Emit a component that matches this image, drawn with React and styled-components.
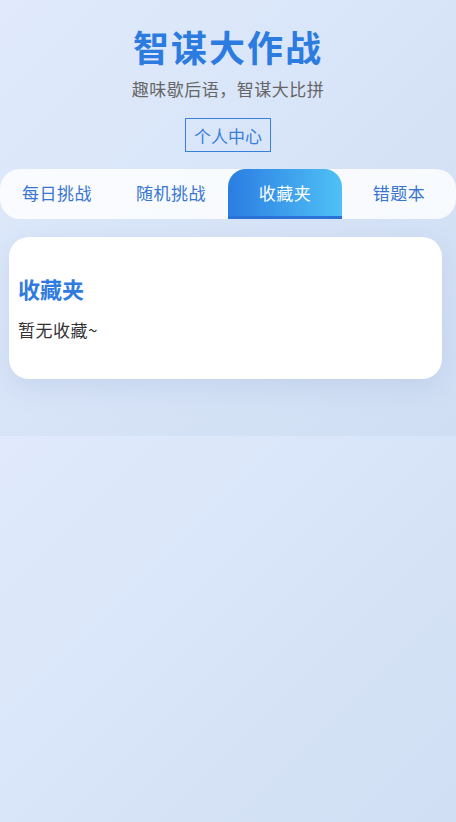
import React, { useState } from "react";
import styled, { createGlobalStyle } from "styled-components";

const GlobalStyle = createGlobalStyle`
  body {
    margin: 0;
    font-family: "Noto Sans CJK SC", "Noto Sans", sans-serif;
    background: linear-gradient(135deg, #e0eafc 0%, #cfdef3 100%);
    color: #333;
  }
`;

const Page = styled.div`
  padding: 24px 0 57px;
`;

const Header = styled.header`
  display: flex;
  flex-direction: column;
  align-items: center;
`;

const Title = styled.h1`
  margin: 0;
  font-size: 36px;
  line-height: 44px;
  font-weight: 700;
  letter-spacing: 2px;
  color: #2b7be0;
`;

const Subtitle = styled.p`
  margin: 10px 0 0;
  font-size: 17px;
  line-height: 22px;
  letter-spacing: 0.5px;
  color: #666;
`;

const ProfileButton = styled.button`
  margin-top: 18px;
  height: 34px;
  padding: 0 8px;
  border: 1px solid #3a7fd9;
  background: transparent;
  color: #3a7fd9;
  font-family: inherit;
  font-size: 17px;
  cursor: pointer;
`;

const TabBar = styled.nav`
  margin-top: 17px;
  display: grid;
  grid-template-columns: repeat(4, 1fr);
  height: 50px;
  background: rgba(255, 255, 255, 0.82);
  border-radius: 20px;
  overflow: hidden;
`;

const Tab = styled.button`
  border: none;
  border-bottom: 3px solid ${(p) => (p.$active ? "#2a72d6" : "transparent")};
  border-radius: ${(p) => (p.$active ? "18px 18px 0 0" : "0")};
  background: ${(p) =>
    p.$active ? "linear-gradient(90deg, #2b7de2 0%, #4fc1f6 100%)" : "transparent"};
  color: ${(p) => (p.$active ? "#fff" : "#3775d0")};
  font-family: inherit;
  font-size: 17px;
  letter-spacing: 0.5px;
  padding: 0;
  cursor: pointer;
`;

const Card = styled.section`
  margin: 18px 14px 0 9px;
  padding: 36px 9px 38px;
  background: #fff;
  border-radius: 20px;
  box-shadow: 0 8px 26px rgba(120, 150, 200, 0.18);
`;

const CardTitle = styled.h2`
  margin: 0;
  font-size: 22px;
  line-height: 30px;
  font-weight: 700;
  color: #2f7be0;
`;

const EmptyText = styled.p`
  margin: 16px 0 0;
  font-size: 17px;
  line-height: 22px;
  letter-spacing: 0.5px;
  color: #333;
`;

const tabs = ["每日挑战", "随机挑战", "收藏夹", "错题本"];

export default function App() {
  const [active, setActive] = useState(2);
  return (
    <>
      <GlobalStyle />
      <Page>
        <Header>
          <Title>智谋大作战</Title>
          <Subtitle>趣味歇后语，智谋大比拼</Subtitle>
          <ProfileButton>个人中心</ProfileButton>
        </Header>
        <TabBar>
          {tabs.map((t, i) => (
            <Tab key={t} $active={i === active} onClick={() => setActive(i)}>
              {t}
            </Tab>
          ))}
        </TabBar>
        <Card>
          <CardTitle>收藏夹</CardTitle>
          <EmptyText>暂无收藏~</EmptyText>
        </Card>
      </Page>
    </>
  );
}
